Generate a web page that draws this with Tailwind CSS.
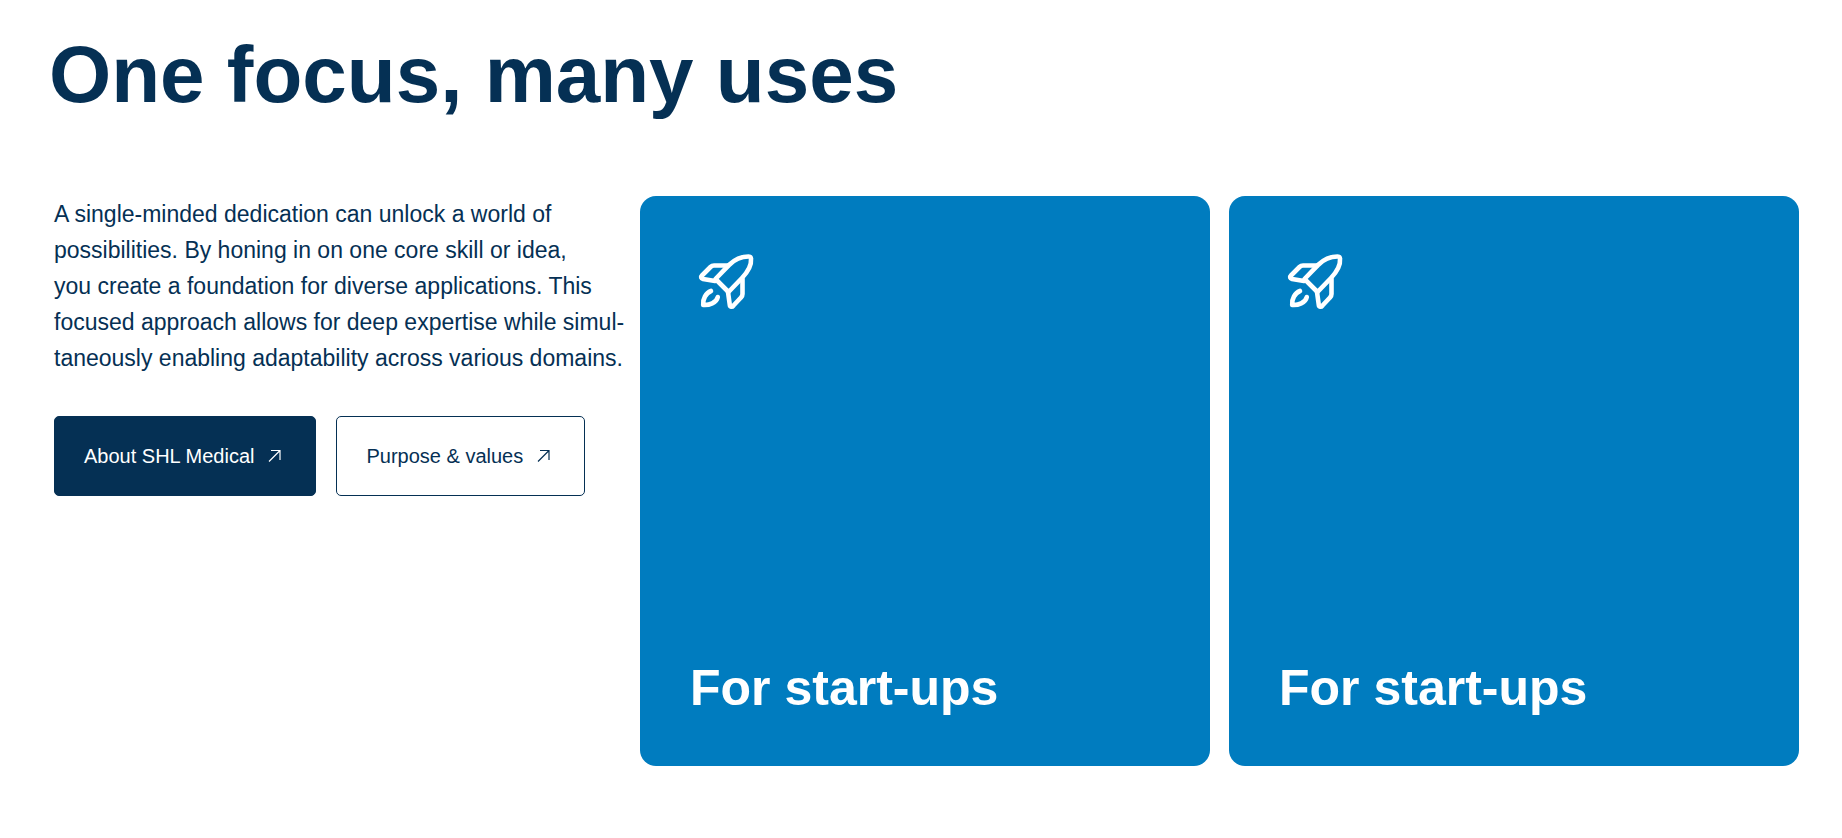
<!DOCTYPE html>
<html lang="en">
<head>
<meta charset="utf-8">
<meta name="viewport" content="width=device-width, initial-scale=1">
<title>One focus, many uses</title>
<script src="https://cdn.jsdelivr.net/npm/@tailwindcss/browser@4"></script>
</head>
<body class="bg-white font-['Liberation_Sans',Arial,sans-serif] text-[#053054]">
<svg class="hidden" aria-hidden="true">
  <symbol id="rocket" viewBox="0 0 75 75">
    <g fill="none" stroke="currentColor" stroke-width="4.600" stroke-linecap="round" stroke-linejoin="round">
      <path d="M25.500 34L38.500 47L52 33C58.500 26 61.500 19 61 14C61 12 60.500 11.500 58.500 11.500C52 11.500 45 14 39 20Z"/>
      <path d="M38 20.500H24Q22 20.500 20.500 22L12 30.500C10.500 32 11 33.500 13 34L25 36"/>
      <path d="M52.500 34V49Q52.500 51 51 52.500L43.500 60.500C42 62.500 40 62 39.800 60L38 47"/>
      <path d="M21 46C16 48 12.500 54 13.200 60C19 60.500 26.500 58 27.800 52"/>
    </g>
  </symbol>
  <symbol id="arrow" viewBox="0 0 14 14">
    <path d="M1 12.500L12 1.500M3 1.500H12V11" fill="none" stroke="currentColor" stroke-width="1.200"/>
  </symbol>
</svg>
<main class="pt-[29px] pr-[43px] pb-[72px] pl-[51px]">
  <h1 class="-ml-0.5 text-[80px] leading-[92px] font-bold">One focus, many uses</h1>
  <div class="mt-[75px] grid grid-cols-3 gap-[19px]">
    <section class="min-w-0 pl-[3px]">
      <p class="text-[23px] leading-[36px] whitespace-nowrap">A single-minded dedication can unlock a world of<br>possibilities. By honing in on one core skill or idea,<br>you create a foundation for diverse applications. This<br>focused approach allows for deep expertise while simul-<br>taneously enabling adaptability across various domains.</p>
      <nav class="mt-10 flex gap-5">
        <a href="#about" class="flex h-20 items-center gap-[14px] whitespace-nowrap rounded-[5px] border border-[#053054] bg-[#053054] pr-[33px] pl-[29px] text-[20px] text-white">About SHL Medical <svg class="size-[14px]" aria-hidden="true"><use href="#arrow"/></svg></a>
        <a href="#purpose" class="flex h-20 items-center gap-[14px] whitespace-nowrap rounded-[5px] border border-[#053054] pr-[33px] pl-[29px] text-[20px]">Purpose &amp; values <svg class="size-[14px]" aria-hidden="true"><use href="#arrow"/></svg></a>
      </nav>
    </section>
    <article class="flex aspect-square flex-col justify-between rounded-2xl bg-[#007cbf] p-[50px] pt-[49px] text-white">
      <svg class="size-[75px]" aria-hidden="true"><use href="#rocket"/></svg>
      <h2 class="text-[50px] leading-[56px] font-bold">For start-ups</h2>
    </article>
    <article class="flex aspect-square flex-col justify-between rounded-2xl bg-[#007cbf] p-[50px] pt-[49px] text-white">
      <svg class="size-[75px]" aria-hidden="true"><use href="#rocket"/></svg>
      <h2 class="text-[50px] leading-[56px] font-bold">For start-ups</h2>
    </article>
  </div>
</main>
</body>
</html>
